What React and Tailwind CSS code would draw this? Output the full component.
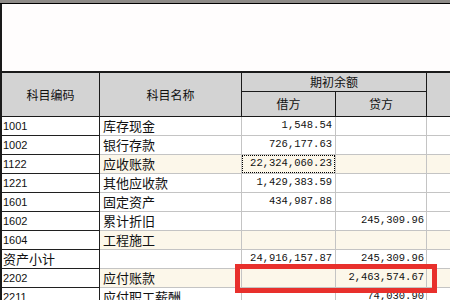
const rows = [
  { code: "1001", name: "库存现金", debit: "1,548.54", credit: "" },
  { code: "1002", name: "银行存款", debit: "726,177.63", credit: "" },
  { code: "1122", name: "应收账款", debit: "22,324,060.23", credit: "", cream: true, focus: true },
  { code: "1221", name: "其他应收款", debit: "1,429,383.59", credit: "" },
  { code: "1601", name: "固定资产", debit: "434,987.88", credit: "" },
  { code: "1602", name: "累计折旧", debit: "", credit: "245,309.96" },
  { code: "1604", name: "工程施工", debit: "", credit: "", cream: true },
  { code: "资产小计", name: "", debit: "24,916,157.87", credit: "245,309.96", total: true },
  { code: "2202", name: "应付账款", debit: "", credit: "2,463,574.67", cream: true },
  { code: "2211", name: "应付职工薪酬", debit: "", credit: "74,030.90" },
];

const cjk = { fontFamily: '"Noto Sans CJK SC", "Noto Sans", sans-serif' };
const sans = { fontFamily: '"Liberation Sans", "Noto Sans CJK SC", sans-serif' };
const mono = { fontFamily: '"Liberation Mono", monospace' };

function Row({ r }) {
  const bg = r.cream ? "bg-[#fcf7ea]" : "bg-white";
  return (
    <div className={`flex h-[19px] ${bg}`}>
      <div
        className={`w-[98px] shrink-0 border-b border-r border-[#202020] pl-[1px] flex items-center text-[#111] ${r.total ? "text-[13px]" : "text-[11px] bg-white"}`}
        style={r.total ? cjk : sans}
      >
        {r.code}
      </div>
      <div className="w-[142px] shrink-0 border-b border-r border-[#c4c4c4] pl-[3px] flex items-center text-[13px] text-[#111]" style={cjk}>
        {r.name}
      </div>
      <div className="w-[94px] shrink-0 border-b border-r border-[#c4c4c4] flex items-center justify-end text-[10.5px] text-[#111]" style={mono}>
        {r.focus ? (
          <div className="w-full h-full border border-dotted border-black flex items-center justify-end pr-[2px]">{r.debit}</div>
        ) : (
          <span className="pr-[3px]">{r.debit}</span>
        )}
      </div>
      <div className="w-[91px] shrink-0 border-b border-r border-[#c4c4c4] flex items-center justify-end pr-[2px] text-[10.5px] text-[#111]" style={mono}>
        {r.credit}
      </div>
      <div className="flex-1 border-b border-[#c4c4c4]" />
    </div>
  );
}

export default function App() {
  return (
    <div className="relative w-[450px] h-[300px] overflow-hidden bg-white">
      <div className="h-[4px] bg-[#8e8b88] border-b border-black" />
      <div className="border-l-2 border-[#1a1a1a]">
        <div className="h-[67px] bg-[#fffdfd]" />
        <div className="flex border-t-2 border-b border-[#1a1a1a] bg-[#d3d3d3] text-[12px] text-[#111]" style={cjk}>
          <div className="w-[98px] h-[43px] shrink-0 border-r border-[#1a1a1a] flex items-center justify-center">科目编码</div>
          <div className="w-[142px] h-[43px] shrink-0 border-r border-[#1a1a1a] flex items-center justify-center">科目名称</div>
          <div className="w-[185px] shrink-0 border-r border-[#1a1a1a] flex flex-col">
            <div className="h-[19px] border-b border-[#1a1a1a] flex items-center justify-center">期初余额</div>
            <div className="flex flex-1">
              <div className="w-[94px] border-r border-[#1a1a1a] flex items-center justify-center">借方</div>
              <div className="flex-1 flex items-center justify-center">贷方</div>
            </div>
          </div>
          <div className="flex-1" />
        </div>
        {rows.map((r) => (
          <Row key={r.code} r={r} />
        ))}
      </div>
      <div className="absolute left-[235px] top-[264px] w-[202px] h-[29px] border-[5px] border-[#e8302c]" />
    </div>
  );
}
